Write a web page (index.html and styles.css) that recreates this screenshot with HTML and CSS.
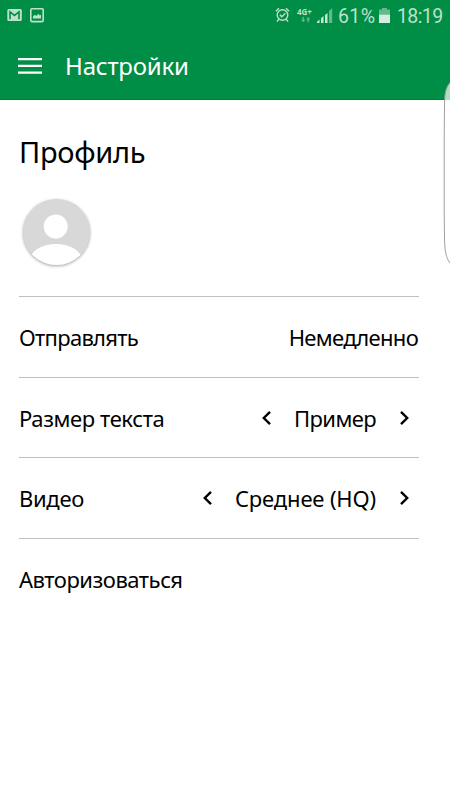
FILE: index.html
```html
<!DOCTYPE html>
<html lang="ru">
<head>
<meta charset="utf-8">
<title>Настройки</title>
<link rel="stylesheet" href="styles.css">
</head>
<body>
<header class="top">
  <div class="status">
    <svg class="notif" width="40" height="18" viewBox="0 0 40 18">
      <rect x="0.3" y="2" width="14.5" height="12" rx="1.5" fill="#bfe0cb"/>
      <path d="M3 12.2V4.8L7.5 8.4 12 4.8v7.4" fill="none" stroke="#008d45" stroke-width="1.6"/>
      <rect x="23.8" y="1.8" width="12.4" height="12.8" rx="1" fill="none" stroke="#bfe0cb" stroke-width="1.6"/>
      <path d="M26 11.5V9.2L28 7.8l1.3 1.2 2.2-2.3 1.2 1.8 1.3-.8v3.8z" fill="#bfe0cb"/>
    </svg>
    <div class="indicators">
      <svg class="alarm" width="15" height="16" viewBox="0 0 15 16" fill="none" stroke="#bfe0cb" stroke-width="1.4">
        <circle cx="7.5" cy="8" r="5.3"/>
        <path d="M.9 4.2 4 1.2M14.1 4.2 11 1.2M3.8 12.3 2 14.6M11.2 12.3 13 14.6M4.8 7.7l2 2 3.6-3.4"/>
      </svg>
      <div class="network">
        <span class="lte">4G+</span>
        <svg width="10" height="6" viewBox="0 0 10 6" fill="#67b88b"><path d="M1.5 0h1.4v2.7h1.5L2.2 5.3 0 2.7h1.5zM6.5 5.3h1.4V2.6h1.5L7.2 0 5 2.6h1.5z"/></svg>
      </div>
      <svg class="signal" width="16" height="16" viewBox="0 0 16 16">
        <path d="M0 15v-1.2L2.5 11.5V15zM4 15v-4.8L6.5 8V15zM8 15V7l2.5-2v10z" fill="#cde7d7"/>
        <path d="M12 15V3l3.2-3v15z" fill="#67b88b"/>
      </svg>
      <span class="percent">61%</span>
      <svg class="battery" width="11" height="16" viewBox="0 0 11 16">
        <path d="M0 1.5h3V0h5v1.5h3V6.5H0z" fill="#67b88b"/>
        <path d="M0 6.5h11V15H0z" fill="#d7ece0"/>
      </svg>
      <span class="clock">18:19</span>
    </div>
  </div>
  <div class="bar">
    <svg class="menu" width="24" height="16" viewBox="0 0 24 16" fill="#fff"><path d="M0 0h24v2.2H0zM0 6.8h24V9H0zM0 13.6h24v2.2H0z"/></svg>
    <h1 class="heading">Настройки</h1>
  </div>
</header>
<main class="content">
  <section class="profile">
    <h2 class="title">Профиль</h2>
    <svg class="avatar" width="67" height="66" viewBox="0 0 67 66">
      <defs><clipPath id="disc"><ellipse cx="33.5" cy="33" rx="33.5" ry="33"/></clipPath></defs>
      <g clip-path="url(#disc)">
        <path fill="#d8d8d8" d="M0 0h67v66H0z"/>
        <circle cx="32.7" cy="27.5" r="12" fill="#fff"/>
        <ellipse cx="33" cy="61" rx="26" ry="16" fill="#fff"/>
      </g>
    </svg>
  </section>
  <div class="row">
    <span class="label send">Отправлять</span>
    <span class="value now">Немедленно</span>
  </div>
  <div class="row">
    <span class="label size">Размер текста</span>
    <div class="stepper">
      <svg class="arrow" width="9" height="14" viewBox="0 0 9 14"><path d="M8 .8 1.8 7 8 13.2"/></svg>
      <span class="value sample">Пример</span>
      <svg class="arrow" width="9" height="14" viewBox="0 0 9 14"><path d="M1 .8 7.2 7 1 13.2"/></svg>
    </div>
  </div>
  <div class="row">
    <span class="label video">Видео</span>
    <div class="stepper">
      <svg class="arrow" width="9" height="14" viewBox="0 0 9 14"><path d="M8 .8 1.8 7 8 13.2"/></svg>
      <span class="value quality">Среднее (HQ)</span>
      <svg class="arrow" width="9" height="14" viewBox="0 0 9 14"><path d="M1 .8 7.2 7 1 13.2"/></svg>
    </div>
  </div>
  <div class="row">
    <span class="label login">Авторизоваться</span>
  </div>
</main>
<svg class="edge" width="7" height="184" viewBox="0 0 7 184">
  <path d="M7 1.5C3 6 1.5 11 1.5 19H7z" fill="#b3dcc5"/>
  <path d="M1.5 19H7V182C3 177 1.5 168 1.5 158z" fill="#fff"/>
  <path d="M7 1.5C3 6 1.8 12 1.5 22L1.2 60V130L1.5 158C1.8 170 3 177 7 182" fill="none" stroke="#888" stroke-width=".8"/>
</svg>
</body>
</html>
```
FILE: styles.css
```css
* { box-sizing: border-box; }
body {
  position: relative;
  margin: 0;
  width: 450px;
  height: 800px;
  overflow: hidden;
  background: #fff;
  color: #000;
  font-family: "Noto Sans", sans-serif;
}
svg { display: block; flex: none; overflow: visible; }
.top {
  height: 100px;
  background: #008d45;
  border-bottom: 1px solid #007d2c;
}
.status {
  display: flex;
  justify-content: space-between;
  height: 32px;
  padding: 7px 8px 0 7px;
}
.indicators {
  display: flex;
  color: #bfe0cb;
  font-family: Roboto, sans-serif;
  font-size: 19px;
  line-height: 19px;
}
.network { width: 16px; margin: 1px 4px 0 7px; }
.network svg { margin: 1px 0 0 4px; }
.lte {
  display: block;
  font: bold 8px/8px "Noto Sans", sans-serif;
}
.signal { margin-top: 1px; }
.percent { width: 38px; margin-left: 5px; font-size: 19.5px; letter-spacing: .4px; white-space: nowrap; }
.battery { margin: 1px 7px 0 3px; }
.clock { width: 45px; font-size: 19.5px; letter-spacing: -.6px; white-space: nowrap; }
.bar {
  display: flex;
  align-items: center;
  height: 67px;
  padding-left: 18px;
}
.menu { margin-right: 23px; }
.heading {
  margin: 0;
  color: #fff;
  font-size: 24px;
  font-weight: 400;
  line-height: 34px;
  letter-spacing: -.2px;
}
.content { width: 419px; padding-left: 19px; }
.profile { height: 196px; padding-top: 32px; }
.title {
  margin: 0;
  font-size: 29px;
  font-weight: 400;
  line-height: 40px;
  letter-spacing: -.3px;
}
.avatar {
  margin: 26.5px 0 0 3.5px;
  filter: drop-shadow(0 1.5px 1.5px rgba(0, 0, 0, .35));
}
.row {
  display: flex;
  align-items: center;
  justify-content: space-between;
  height: 80.5px;
  padding-top: 1px;
  border-top: 1px solid #bfbfbf;
  font-size: 22px;
  line-height: 30px;
  white-space: nowrap;
}
.send { letter-spacing: -.7px; }
.now { margin-right: 1px; letter-spacing: -.7px; }
.size { letter-spacing: -.4px; }
.sample { letter-spacing: -.6px; }
.video { letter-spacing: -.3px; }
.quality { letter-spacing: -.15px; }
.login { letter-spacing: -.47px; }
.stepper { display: flex; align-items: center; padding-right: 10px; }
.arrow { fill: none; stroke: #000; stroke-width: 2.4; }
.stepper .value { margin: 0 24px 0 23px; }
.edge { position: absolute; top: 81px; right: 0; }
```
